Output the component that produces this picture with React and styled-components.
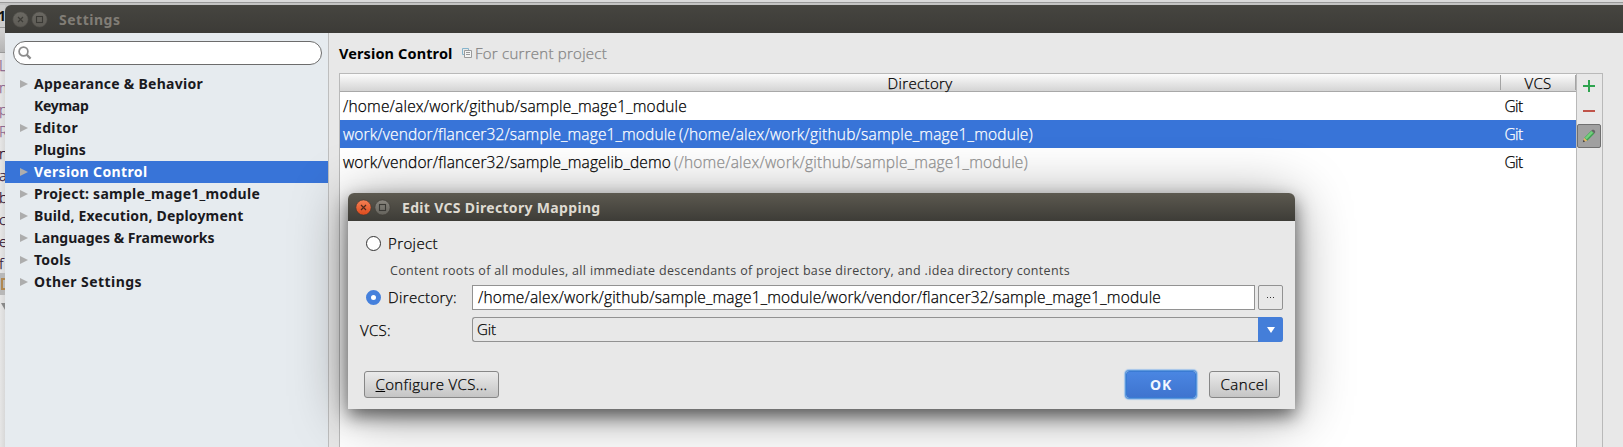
import React, { useLayoutEffect, useRef, useState } from "react";
import styled, { createGlobalStyle, css } from "styled-components";

const GlobalStyle = createGlobalStyle`
  *, *::before, *::after { box-sizing: border-box; }
  html, body { margin: 0; padding: 0; overflow: hidden; background: #e8e8e8; }
  body { font-family: "Open Sans", "Noto Sans", sans-serif; font-size: 15px; color: #111; }
`;

/* light weight, thickened slightly for legibility */
const lightText = css`
  font-weight: 300;
  -webkit-text-stroke: 0.25px currentColor;
`;

/* ---------- text that is tracked to an exact advance width ---------- */
const TextBox = styled.span`
  display: inline-block;
  flex: none;
  width: ${(p) => p.$w}px;
  white-space: pre;
  overflow: visible;
`;

function Text({ w, children, ...rest }) {
  const ref = useRef(null);
  const [spacing, setSpacing] = useState(0);
  useLayoutEffect(() => {
    const natural = ref.current.getBoundingClientRect().width;
    setSpacing((w - natural) / ref.current.textContent.length);
  }, [w]);
  return (
    <TextBox $w={w} {...rest}>
      <span ref={ref} style={{ letterSpacing: spacing }}>{children}</span>
    </TextBox>
  );
}

const Screen = styled.div`
  position: relative;
  width: 1623px;
  height: 447px;
  overflow: hidden;
  display: flex;
  flex-direction: column;
  background: #e8e8e8;
`;

/* ---------- editor window behind the settings ---------- */
const BackdropTop = styled.div`
  flex: none;
  height: 5px;
  background: linear-gradient(#dadada 0 2px, #999 2px 3px, #c4c4c4 3px 5px);
`;
const BackdropBody = styled.div`
  flex: 1;
  display: flex;
  min-height: 0;
  background: #c4c4c4;
`;
const Gutter = styled.div`
  width: 5px;
  flex: none;
  overflow: hidden;
  background: linear-gradient(90deg, #e6e6e6, #d8d8d8);
`;
const GutterTab = styled.div`
  height: 23px;
  background: #cdcdcd;
  border-bottom: 1px solid #999;
  font: bold 14px/22px "Noto Sans", sans-serif;
  text-indent: -2px;
  color: #111;
`;
const GutterHeader = styled.div`
  height: 25px;
  background: linear-gradient(#d2d2d2, #b4b4b4);
  border-bottom: 1px solid #999;
`;
const GutterRow = styled.div`
  height: 22px;
  font: 300 15px/24px "Open Sans", sans-serif;
  color: ${(p) => (p.$tint ? "#8a5f8a" : "#2a0a2a")};
  text-indent: -1px;
  ${lightText}
  ${(p) => p.$selected && css`background: #b8b8b8;`}
  svg { display: block; }
`;

/* ---------- window chrome ---------- */
const SettingsWindow = styled.div`
  flex: 1;
  display: flex;
  flex-direction: column;
  min-width: 0;
  border-top-left-radius: 6px;
  overflow: hidden;
`;
const TitleBar = styled.div`
  flex: none;
  height: 28px;
  display: flex;
  align-items: center;
  padding-left: 7px;
  background: ${(p) =>
    p.$active ? "linear-gradient(#5d5a50, #59564d 3px, #3d3c37)" : "linear-gradient(#464540, #3c3b37)"};
  color: ${(p) => (p.$active ? "#dfdbd2" : "#817d76")};
  font-family: "Noto Sans", sans-serif;
  font-weight: 700;
  font-size: 14px;
  line-height: 28px;
`;
const TitleText = styled.div`
  margin-left: 11px;
  padding-top: 1px;
`;

function WindowControls({ active, id }) {
  return (
    <svg width="36" height="18" viewBox="0 0 36 18" fill="none">
      <defs>
        <linearGradient id={id + "c"} x1="0" y1="0" x2="0" y2="1">
          <stop offset="0" stopColor={active ? "#f58155" : "#6b6963"} />
          <stop offset="1" stopColor={active ? "#de4a1c" : "#5d5b55"} />
        </linearGradient>
        <linearGradient id={id + "m"} x1="0" y1="0" x2="0" y2="1">
          <stop offset="0" stopColor={active ? "#8a8780" : "#6b6963"} />
          <stop offset="1" stopColor={active ? "#64625b" : "#5d5b55"} />
        </linearGradient>
      </defs>
      <circle cx="8.5" cy="9.5" r="7.6" fill={`url(#${id}c)`} stroke={active ? "#45352d" : "#53514c"} strokeWidth=".6" />
      <path d="M6 7l5 5M11 7l-5 5" stroke={active ? "#4f2a1c" : "#3d3c37"} strokeWidth="1.2" />
      <circle cx="27.5" cy="9.5" r="7.6" fill={`url(#${id}m)`} stroke={active ? "#3f3d38" : "#53514c"} strokeWidth=".6" />
      <rect x="24.5" y="6.5" width="6" height="6" stroke="#3a3935" strokeWidth="1.1" />
    </svg>
  );
}

/* ---------- sidebar ---------- */
const Content = styled.div`
  flex: 1;
  display: flex;
  min-height: 0;
`;
const Sidebar = styled.aside`
  width: 324px;
  flex: none;
  padding-top: 8px;
  background: #e6ebef;
  border-right: 1px solid #bebebe;
`;
const Search = styled.div`
  width: 309px;
  height: 24px;
  margin: 0 0 8px 8px;
  padding: 0 4px;
  display: flex;
  align-items: center;
  background: #fff;
  border: 1px solid #6c6c6c;
  border-radius: 12px;
`;
const TreeRow = styled.div`
  height: 22px;
  display: flex;
  align-items: center;
  padding-left: 15px;
  font-family: "Noto Sans", sans-serif;
  font-size: 14px;
  font-weight: 700;
  line-height: 20px;
  color: ${(p) => (p.$selected ? "#fff" : "#1a1a1e")};
  background: ${(p) => (p.$selected ? "#3874d8" : "transparent")};
`;
const Arrow = styled.span`
  width: 8px;
  margin-right: 6px;
  flex: none;
  ${(p) =>
    p.$shown &&
    css`
      border-left: 8px solid #adadad;
      border-top: 4.5px solid transparent;
      border-bottom: 4.5px solid transparent;
    `}
`;

/* ---------- main pane ---------- */
const Main = styled.main`
  flex: 1;
  min-width: 0;
  display: flex;
  flex-direction: column;
  padding: 0 20px 0 10px;
  background: #e8e8e8;
`;
const Heading = styled.div`
  flex: none;
  height: 40px;
  display: flex;
  align-items: center;
  line-height: 20px;
  padding-bottom: 1px;
`;
const HeadingTitle = styled(Text)`
  font-family: "Noto Sans", sans-serif;
  font-size: 14.5px;
  font-weight: 700;
  color: #000;
`;
const ScopeIcon = styled.svg`
  margin: 0 3px 0 9.5px;
  flex: none;
`;
const HeadingNote = styled(Text)`
  color: #858585;
  ${lightText}
`;
const TablePanel = styled.div`
  flex: 1;
  display: flex;
  border: 1px solid #b9b9b9;
  border-bottom: 0;
`;
const Table = styled.div`
  flex: 1;
  background: #fff;
  border-right: 1px solid #b9b9b9;
`;
const HeaderRow = styled.div`
  height: 18px;
  display: flex;
  align-items: center;
  background: linear-gradient(#fbfbfb, #d4d4d4);
  border-bottom: 1px solid #a8a8a8;
  font-size: 15px;
  line-height: 18px;
  color: #000;
  ${lightText}
`;
const HeaderCell = styled.div`
  display: flex;
  justify-content: center;
  height: 15px;
  line-height: 17px;
  ${(p) => (p.$w ? css`width: ${p.$w}px;` : css`flex: 1;`)}
  border-right: 1px solid #a4a4a4;
`;
const TableRow = styled.div`
  height: 28px;
  display: flex;
  align-items: center;
  padding-left: 3px;
  font-size: 15.5px;
  line-height: 26px;
  ${lightText}
  color: ${(p) => (p.$selected ? "#fff" : "#000")};
  background: ${(p) => (p.$selected ? "#3874d8" : "transparent")};
`;
const PathCell = styled.div`
  width: 1161.5px;
  flex: none;
  display: flex;
`;
const Muted = styled(Text)`
  margin-left: 3px;
  color: ${(p) => (p.$selected ? "#fff" : "#939393")};
`;
const Toolbar = styled.div`
  width: 25px;
  flex: none;
  display: flex;
  flex-direction: column;
  background: #e8e8e8;
`;
const ToolButton = styled.div`
  width: 24px;
  height: 24px;
  margin-bottom: 1px;
  display: flex;
  align-items: center;
  justify-content: center;
  ${(p) =>
    p.$pressed &&
    css`
      background: #a0a0a0;
      border: 1px solid #707070;
      border-radius: 2px;
    `}
`;

/* ---------- dialog ---------- */
const Dialog = styled.section`
  position: absolute;
  left: 348px;
  top: 193px;
  width: 947px;
  height: 216px;
  display: flex;
  flex-direction: column;
  border-radius: 6px 6px 0 0;
  background: #e8e8e8;
  box-shadow: 0 7px 18px rgba(0, 0, 0, 0.55), 0 6px 56px rgba(0, 0, 0, 0.4);
`;
const DialogTitleBar = styled(TitleBar)`
  border-radius: 6px 6px 0 0;
`;
const Form = styled.div`
  flex: 1;
  display: flex;
  flex-direction: column;
  padding: 10px 12px 0;
  font-size: 15px;
  line-height: 22px;
  color: #000;
  ${lightText}
`;
const FormRow = styled.div`
  flex: none;
  display: flex;
  align-items: center;
  height: 25px;
  margin-bottom: ${(p) => p.$gap || 0}px;
`;
const RadioText = styled(Text)`
  line-height: 20px;
  padding-bottom: 1px;
`;
const FieldLabel = styled.div`
  width: 112px;
  flex: none;
  display: flex;
  align-items: center;
`;
const Radio = styled.span`
  width: 15px;
  height: 15px;
  flex: none;
  margin: 0 7px 0 6px;
  border-radius: 50%;
  background: #fff;
  border: ${(p) => (p.$checked ? "5px solid #4580dc" : "1px solid #333")};
`;
const Hint = styled.div`
  height: 21px;
  padding-left: 30px;
  margin-bottom: 5px;
  font-family: "Open Sans", sans-serif;
  font-weight: 400;
  -webkit-text-stroke: 0;
  font-size: 12.5px;
  line-height: 23px;
  color: #444;
`;
const Input = styled.div`
  width: 783px;
  height: 25px;
  flex: none;
  padding-left: 5px;
  border: 1px solid #929292;
  background: #fff;
  font-size: 15.5px;
  line-height: 22px;
`;
const Browse = styled.div`
  width: 25px;
  height: 25px;
  margin-left: 3px;
  display: flex;
  align-items: center;
  justify-content: center;
  border: 1px solid #929292;
  border-radius: 2px;
`;
const Select = styled.div`
  width: 811px;
  height: 25px;
  flex: none;
  display: flex;
  justify-content: space-between;
  padding-left: 4px;
  border: 1px solid #929292;
  border-right: 0;
  border-radius: 3px;
  line-height: 22px;
`;
const SelectButton = styled.div`
  width: 25px;
  height: 25px;
  margin-top: -1px;
  display: flex;
  align-items: center;
  justify-content: center;
  background: #447ed9;
  border-radius: 0 3px 3px 0;
`;
const Buttons = styled.div`
  display: flex;
  align-items: center;
  height: 31px;
  margin-top: 27px;
  padding: 0 3px 0 4px;
`;
const Button = styled.div`
  width: ${(p) => p.$w}px;
  height: 27px;
  display: flex;
  justify-content: center;
  border: 1px solid #878787;
  border-radius: 3px;
  background: linear-gradient(#eaeaea, #c5c5c5);
  line-height: 25px;
`;
const PrimaryButton = styled(Button)`
  margin: 0 13px 0 auto;
  border-color: #3a7bd3;
  background: linear-gradient(#4a86e2, #3f74cf);
  box-shadow: 0 0 0 1px #5c98dc, 0 0 1px 2px #a5c5ea;
  color: #f2f6ff;
  font-family: "Noto Sans", sans-serif;
  font-size: 14px;
  font-weight: 700;
  -webkit-text-stroke: 0;
  line-height: 26px;
`;

const tree = [
  ["Appearance & Behavior", 169, true],
  ["Keymap", 54.5, false],
  ["Editor", 44, true],
  ["Plugins", 52, false],
  ["Version Control", 113.5, true],
  ["Project: sample_mage1_module", 226, true],
  ["Build, Execution, Deployment", 209.5, true],
  ["Languages & Frameworks", 180.5, true],
  ["Tools", 37, true],
  ["Other Settings", 108, true],
];

const mappings = [
  { path: "/home/alex/work/github/sample_mage1_module", w: 344 },
  { path: "work/vendor/flancer32/sample_mage1_module", w: 333, root: "(/home/alex/work/github/sample_mage1_module)", rw: 354, selected: true },
  { path: "work/vendor/flancer32/sample_magelib_demo", w: 328, root: "(/home/alex/work/github/sample_mage1_module)", rw: 354 },
];

const gutter = [
  ["L", true], ["m", true], ["p", true], ["R", true], ["n"], ["a"], ["b"], ["c"], ["e"], ["f"],
];

export default function App() {
  return (
    <Screen>
      <GlobalStyle />
      <BackdropTop />
      <BackdropBody>
        <Gutter>
          <GutterTab>1</GutterTab>
          <GutterHeader />
          {gutter.map(([c, tint], i) => (
            <GutterRow key={i} $tint={tint}>{c}</GutterRow>
          ))}
          <GutterRow $selected>
            <svg width="5" height="22" viewBox="0 0 5 22" fill="none">
              <path d="M6 6H2v10h4" stroke="#b08850" strokeWidth="2" />
            </svg>
          </GutterRow>
          <GutterRow>
            <svg width="5" height="22" viewBox="0 0 5 22">
              <path d="M1 8h8l-4 7z" fill="#888" />
            </svg>
          </GutterRow>
        </Gutter>
        <SettingsWindow>
          <TitleBar>
            <WindowControls id="s" />
            <TitleText><Text w={61.5}>Settings</Text></TitleText>
          </TitleBar>
          <Content>
            <Sidebar>
              <Search>
                <svg width="14" height="14" viewBox="0 0 14 14" fill="none" stroke="#8c8c8c">
                  <circle cx="5.5" cy="5.5" r="4.4" strokeWidth="1.7" />
                  <path d="M8.6 8.6l4 4" strokeWidth="2.2" />
                </svg>
              </Search>
              {tree.map(([name, w, arrow]) => (
                <TreeRow key={name} $selected={name === "Version Control"}>
                  <Arrow $shown={arrow} />
                  <Text w={w}>{name}</Text>
                </TreeRow>
              ))}
            </Sidebar>
            <Main>
              <Heading>
                <HeadingTitle w={113.5}>Version Control</HeadingTitle>
                <ScopeIcon width="10" height="10" viewBox="0 0 10 10" fill="none">
                  <path d="M2.5 6.5h-2v-6h6v2" stroke="#86b4cc" />
                  <path d="M2.5 2.5h7v7h-7z" fill="#f4f4f4" stroke="#9a9a9a" />
                  <path d="M4 4.5h4M4 6.5h4" stroke="#9a9a9a" />
                </ScopeIcon>
                <HeadingNote w={132}>For current project</HeadingNote>
              </Heading>
              <TablePanel>
                <Table>
                  <HeaderRow>
                    <HeaderCell><Text w={65}>Directory</Text></HeaderCell>
                    <HeaderCell $w={75}><Text w={27}>VCS</Text></HeaderCell>
                  </HeaderRow>
                  {mappings.map((m) => (
                    <TableRow key={m.path} $selected={m.selected}>
                      <PathCell>
                        <Text w={m.w}>{m.path}</Text>
                        {m.root && <Muted w={m.rw} $selected={m.selected}>{m.root}</Muted>}
                      </PathCell>
                      <Text w={18}>Git</Text>
                    </TableRow>
                  ))}
                </Table>
                <Toolbar>
                  <ToolButton>
                    <svg width="12" height="12" viewBox="0 0 12 12"><path d="M5 0h2v5h5v2H7v5H5V7H0V5h5z" fill="#2ea44f" /></svg>
                  </ToolButton>
                  <ToolButton>
                    <svg width="12" height="12" viewBox="0 0 12 12"><path d="M0 5h12v2H0z" fill="#c0544a" /></svg>
                  </ToolButton>
                  <ToolButton $pressed>
                    <svg width="14" height="14" viewBox="0 0 14 14">
                      <path d="M1 13l1.3-4.3 3 3z" fill="#e8b860" />
                      <path d="M.8 13.2l.7-2.4 1.7 1.7z" fill="#444" />
                      <path d="M2.300 8.700L9.400 1.600l3 3-7.100 7.100z" fill="#3f9f50" />
                      <path d="M2.800 8.700L9.500 2l1.700 1.700L4.500 10.400z" fill="#72cf7c" />
                      <path d="M9.400 1.600l1-.9h1.500l1.200 1.300v1.500l-.7 1.100z" fill="#666" />
                    </svg>
                  </ToolButton>
                </Toolbar>
              </TablePanel>
            </Main>
          </Content>
        </SettingsWindow>
      </BackdropBody>

      <Dialog>
        <DialogTitleBar $active>
          <WindowControls active id="d" />
          <TitleText><Text w={198.5}>Edit VCS Directory Mapping</Text></TitleText>
        </DialogTitleBar>
        <Form>
          <FormRow $gap={3}>
            <Radio />
            <RadioText w={50}>Project</RadioText>
          </FormRow>
          <Hint>
            <Text w={680}>Content roots of all modules, all immediate descendants of project base directory, and .idea directory contents</Text>
          </Hint>
          <FormRow $gap={7}>
            <FieldLabel><Radio $checked /><RadioText w={69}>Directory:</RadioText></FieldLabel>
            <Input><Text w={683}>/home/alex/work/github/sample_mage1_module/work/vendor/flancer32/sample_mage1_module</Text></Input>
            <Browse>
              <svg width="8" height="2" viewBox="0 0 8 2"><path d="M0 0h1v1H0zM3 0h1v1H3zM6 0h1v1H6z" fill="#333" /></svg>
            </Browse>
          </FormRow>
          <FormRow>
            <FieldLabel><Text w={31}>VCS:</Text></FieldLabel>
            <Select>
              <Text w={19}>Git</Text>
              <SelectButton>
                <svg width="8" height="6" viewBox="0 0 8 6"><path d="M0 0h8L4 6z" fill="#fff" /></svg>
              </SelectButton>
            </Select>
          </FormRow>
          <Buttons>
            <Button $w={135}><Text w={112}><u>C</u>onfigure VCS...</Text></Button>
            <PrimaryButton $w={70}><Text w={22}>OK</Text></PrimaryButton>
            <Button $w={71}><Text w={48}>Cancel</Text></Button>
          </Buttons>
        </Form>
      </Dialog>
    </Screen>
  );
}
